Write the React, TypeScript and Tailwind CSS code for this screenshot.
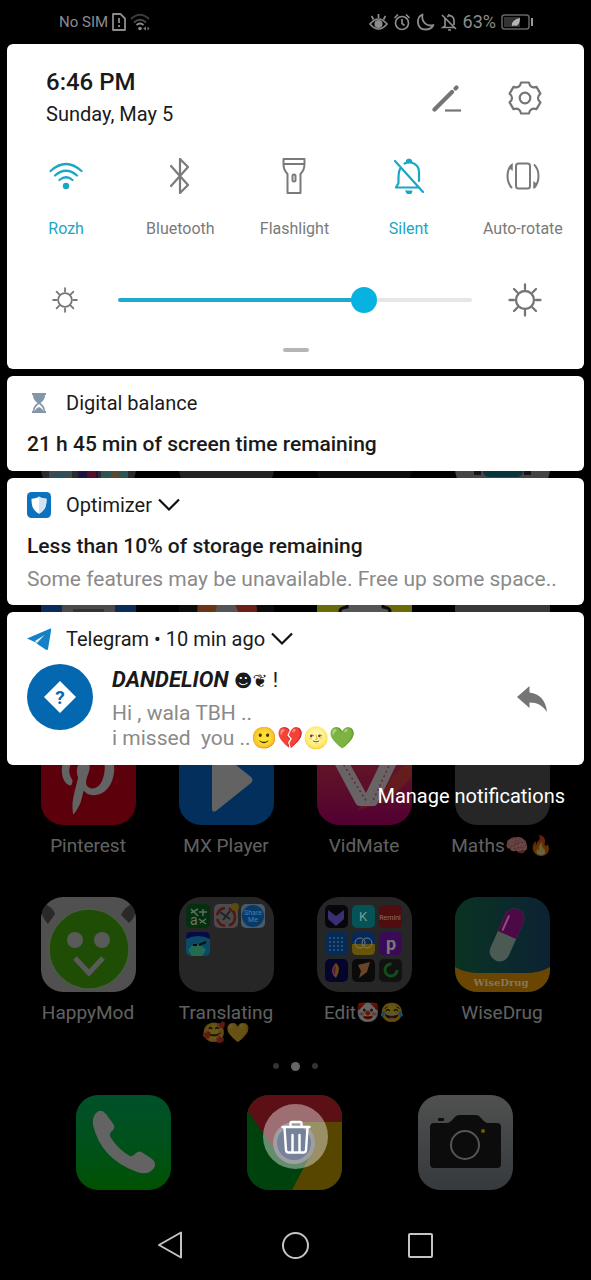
import type { ReactNode } from "react";
import { FaPinterestP } from "react-icons/fa";

const StatusBar = () => (
  <div className="flex h-11 items-center justify-between pl-[59px] pr-[57px] text-[#8c8c8c]">
    <div className="flex items-center gap-1">
      <span className="text-[15px] leading-5">No SIM</span>
      <svg width="14" height="18" viewBox="0 0 14 18" fill="none" stroke="currentColor" strokeWidth="1.8">
        <path d="M1 1h7.5L13 5.5V17H1z" strokeLinejoin="round" />
        <path d="M7 5v5M7 12v2" />
      </svg>
      <svg width="21" height="18" viewBox="0 0 21 18" fill="none" strokeWidth="1.8">
        <path d="M1 6q9-8.500 18 0" stroke="#3c3c3c" />
        <path d="M4 9.500q6-5.500 12 0" stroke="#4a4a4a" />
        <path d="M6.500 12q3.500-3 7 0" stroke="currentColor" />
        <circle cx="10" cy="15.500" r="1.800" fill="currentColor" />
        <path d="M13 15.500l3-2v4zM19.500 15.500l-2-2v4z" fill="#777" />
      </svg>
    </div>
    <div className="flex items-center gap-[5px]">
      <svg width="19" height="18" viewBox="0 0 19 18" fill="none" stroke="currentColor" strokeWidth="1.700">
        <path d="M1 11q8.500-10 17 0q-8.500 10-17 0z" />
        <circle cx="9.500" cy="11" r="3.200" fill="currentColor" />
        <path d="M9.500 5V1M4.500 6.500L2.500 3M14.500 6.500l2-3.500" />
      </svg>
      <svg width="18" height="18" viewBox="0 0 18 18" fill="none" stroke="currentColor" strokeWidth="1.700">
        <circle cx="9" cy="10" r="6.500" />
        <path d="M9 6v4.500l2.500 2M1.500 5L5 1.500M16.500 5L13 1.500" />
      </svg>
      <svg width="19" height="18" viewBox="0 0 19 18" fill="none" stroke="currentColor" strokeWidth="1.800">
        <path d="M6.500 1.500C-.5 4.500.5 16.500 9.500 16.500c4 0 7-2.500 8-4.500C11 14 5 9 6.500 1.500z" strokeLinejoin="round" />
      </svg>
      <svg width="18" height="18" viewBox="0 0 18 18" fill="none" stroke="currentColor" strokeWidth="1.700">
        <path d="M2 2l14 14M5 5.500V13L3 14.500h11M7 3.500c3.500-2 7 0 7 4V12M9 1v2M8 17h3" />
      </svg>
      <span className="text-lg leading-5">63%</span>
      <svg width="33" height="16" viewBox="0 0 33 16" fill="none">
        <rect x="1" y="1" width="27" height="14" rx="2.500" stroke="#666" strokeWidth="1.500" />
        <rect x="3" y="3" width="16" height="10" fill="#333" />
        <path d="M11 12c-1-4 3-7 8-8c0 5-2 9-6 7.500z" fill="#b5b5b5" />
        <path d="M31 4v8" stroke="#999" strokeWidth="2" />
      </svg>
    </div>
  </div>
);

const WifiTileIcon = () => (
  <svg width="34" height="30" viewBox="0 0 34 30" fill="none" stroke="currentColor" strokeWidth="2.200" strokeLinecap="round">
    <path d="M1.500 10q15.500-14 31 0M6 14.500q11-9.500 22 0M10.500 19q6.500-5.500 13 0" />
    <circle cx="17" cy="25" r="3.200" fill="currentColor" stroke="none" />
  </svg>
);

const BluetoothTileIcon = () => (
  <svg width="22" height="36" viewBox="0 0 22 36" fill="none" stroke="currentColor" strokeWidth="2.200" strokeLinejoin="round" strokeLinecap="round">
    <path d="M2 8l17 19-8 8V1l8 8L2 28" />
  </svg>
);

const FlashlightTileIcon = () => (
  <svg width="24" height="36" viewBox="0 0 24 36" fill="none" stroke="currentColor" strokeWidth="2" strokeLinejoin="round">
    <path d="M1.500 1h21v5q0 6-4 10v19h-13V16q-4-4-4-10zM1.500 6h21" />
    <rect x="10.500" y="16.500" width="3" height="7" rx="1.500" />
  </svg>
);

const SilentTileIcon = () => (
  <svg width="32" height="36" viewBox="0 0 32 36" fill="none" stroke="currentColor" strokeWidth="2.200" strokeLinecap="round" strokeLinejoin="round">
    <path d="M2 3l28 31M7 11c-2 4-1.500 9-1.500 14L3 29.500h22M11.500 5.500C19 2 26 7 26 14v9" />
    <path d="M13 4a3 3 0 016 0zM13 33h6a3 3 0 01-6 0z" fill="currentColor" strokeWidth="1" />
  </svg>
);

const RotateTileIcon = () => (
  <svg width="34" height="28" viewBox="0 0 34 28" fill="none" stroke="currentColor" strokeWidth="2">
    <rect x="10" y="1.500" width="14" height="25" rx="2.500" />
    <path d="M6 2.500C0 8 0 20 6 26M28 2.500c6 5.500 6 17.500 0 23.500" />
    <path d="M6.500 1.500v7L3 6zM27.500 26.500v-7L31 22z" fill="currentColor" strokeWidth=".5" />
  </svg>
);

const SunIcon = ({ size }: { size: number }) => (
  <svg className="shrink-0 text-[#757575]" width={size} height={size} viewBox="0 0 34 34" fill="none" stroke="currentColor" strokeWidth="2.300" strokeLinecap="round">
    <circle cx="17" cy="17" r="9" />
    <path d="M17 1.500V6M17 28v4.500M1.500 17H6M28 17h4.500M6 6l3.500 3.500M24.500 24.500L28 28M6 28l3.500-3.500M24.500 9.500L28 6" />
  </svg>
);

const ChevronIcon = () => (
  <svg width="22" height="14" viewBox="0 0 22 14" fill="none" stroke="#111" strokeWidth="2.200">
    <path d="M1 1.500l10 10 10-10" />
  </svg>
);

const tiles = [
  { label: "Rozh", icon: <WifiTileIcon />, on: true },
  { label: "Bluetooth", icon: <BluetoothTileIcon />, on: false },
  { label: "Flashlight", icon: <FlashlightTileIcon />, on: false },
  { label: "Silent", icon: <SilentTileIcon />, on: true },
  { label: "Auto-rotate", icon: <RotateTileIcon />, on: false },
];

const QuickSettings = () => (
  <section className="rounded-md bg-white pb-[17px] pt-[22px]">
    <div className="flex items-center justify-between pl-[39px] pr-[42px] text-[#1a1a1a]">
      <div>
        <p className="text-2xl font-medium leading-8">6:46 PM</p>
        <p className="text-[20px] leading-8">Sunday, May 5</p>
      </div>
      <div className="flex items-center gap-[46px] text-[#757575]">
        <button type="button" aria-label="Edit tiles">
          <svg width="30" height="30" viewBox="0 0 30 30" fill="none" stroke="currentColor">
            <path d="M2.500 26.500L20 9" strokeWidth="4.200" strokeLinecap="round" />
            <path d="M23.500 5.500l1-1" strokeWidth="4.200" strokeLinecap="round" />
            <path d="M13 27.500h16" strokeWidth="2.200" />
          </svg>
        </button>
        <button type="button" aria-label="Settings">
          <svg width="34" height="34" viewBox="0 0 34 34" fill="none" stroke="currentColor" strokeWidth="2.200" strokeLinejoin="round">
            <path d="M13.1 1.500h7.8Q22.300 7.900 28.500 5.900L32.400 12.600Q27.500 17 32.400 21.400L28.500 28.100Q22.300 26.100 20.900 32.500H13.100Q11.700 26.100 5.500 28.100L1.600 21.400Q6.500 17 1.600 12.600L5.500 5.900Q11.700 7.900 13.100 1.500z" />
            <circle cx="17" cy="17" r="5.300" />
          </svg>
        </button>
      </div>
    </div>
    <div className="mt-[26px] grid grid-cols-5 pl-[2px] pr-1">
      {tiles.map((tile) => (
        <button
          key={tile.label}
          type="button"
          className={`flex flex-col items-center gap-[23px] ${tile.on ? "text-[#1ba6c6]" : "text-[#7a7a7a]"}`}>
          <span className="flex h-10 items-center">{tile.icon}</span>
          <span className="text-base leading-5">{tile.label}</span>
        </button>
      ))}
    </div>
    <div className="mt-[41px] flex h-10 items-center pl-[45px] pr-[42px]">
      <SunIcon size={26} />
      <input
        type="range"
        aria-label="Brightness"
        defaultValue={71}
        className="ml-10 mr-9 h-7 min-w-0 flex-1 appearance-none bg-transparent [&::-webkit-slider-runnable-track]:h-1 [&::-webkit-slider-runnable-track]:rounded-full [&::-webkit-slider-runnable-track]:bg-[linear-gradient(to_right,#1fa9cb_70%,#e6e6e6_70%)] [&::-webkit-slider-thumb]:-mt-[11px] [&::-webkit-slider-thumb]:size-[26px] [&::-webkit-slider-thumb]:appearance-none [&::-webkit-slider-thumb]:rounded-full [&::-webkit-slider-thumb]:bg-[#06b3e0]"
      />
      <SunIcon size={34} />
    </div>
    <div className="mx-auto mt-7 h-1 w-[26px] rounded-full bg-[#b5b5b5]" />
  </section>
);

type NoticeProps = { icon: ReactNode; app: string; expandable?: boolean; children: ReactNode };

const Notice = ({ icon, app, expandable, children }: NoticeProps) => (
  <article className="rounded-md bg-white px-5 pt-[11px] text-[#1a1a1a]">
    <div className="flex h-8 items-center">
      <span className="mr-[15px] flex w-6 justify-center">{icon}</span>
      <span className="text-[20px] leading-6">{app}</span>
      {expandable && (
        <button type="button" aria-label="Expand" className="ml-[6px]">
          <ChevronIcon />
        </button>
      )}
    </div>
    {children}
  </article>
);

const NotificationShade = () => (
  <div className="z-10 col-start-1 row-start-1 flex min-w-0 flex-col">
    <StatusBar />
    <div className="flex flex-col gap-[7px] px-[7px]">
      <QuickSettings />
      <Notice
        app="Digital balance"
        icon={
          <svg width="14" height="20" viewBox="0 0 14 20">
            <path d="M0 0h14v2H0zM0 18h14v2H0zM1 2h12c0 4-2 6-4.500 8C11 12 13 14 13 18h-1.500c0-3-2-5-4.500-7-2.500 2-4.500 4-4.500 7H1c0-4 2-6 4.500-8C3 8 1 6 1 2z" fill="#8497a8" />
            <path d="M3 18c0-2 2-3 4-4 2 1 4 2 4 4z" fill="#8497a8" />
          </svg>
        }>
        <p className="mt-[11px] pb-[13px] text-[21px] font-medium leading-7">21 h 45 min of screen time remaining</p>
      </Notice>
      <Notice
        app="Optimizer"
        expandable
        icon={
          <svg width="24" height="26" viewBox="0 0 24 26">
            <rect width="24" height="26" rx="4.500" fill="#0c72bd" />
            <path d="M12 4.500c2 1.500 4 2 7.500 2.200 0 7-1 11.500-7.500 15-6.500-3.500-7.500-8-7.500-15C8 6.500 10 6 12 4.500z" fill="#fff" />
            <path d="M12 4.500c2 1.500 4 2 7.500 2.200 0 7-1 11.500-7.500 15z" fill="#cfe3f3" />
          </svg>
        }>
        <p className="mt-[11px] text-[21px] font-medium leading-7">Less than 10% of storage remaining</p>
        <p className="mt-[5px] overflow-hidden whitespace-nowrap pb-3 text-[21px] leading-7 text-[#8a8a8a]">
          Some features may be unavailable. Free up some space..
        </p>
      </Notice>
      <Notice
        app="Telegram • 10 min ago"
        expandable
        icon={
          <svg width="24" height="24" viewBox="0 0 24 24">
            <path d="M0 11.500L24.500 1 21 22q-.5 1.500-2 .7L11 17.500 9 15.500z" fill="#1480c8" />
            <path d="M8 14L17.500 8 10 16z" fill="#e8f4fb" />
          </svg>
        }>
        <div className="mt-[9px] flex items-center pb-[14px] pr-[17px]">
          <div className="flex size-[66px] shrink-0 items-center justify-center self-start rounded-full bg-[#0468b1]">
            <svg width="32" height="32" viewBox="0 0 32 32">
              <path d="M16 0l16 16-16 16L0 16z" fill="#fff" />
              <text x="16" y="22.500" textAnchor="middle" fontSize="19" fontWeight="700" fill="#0468b1">?</text>
            </svg>
          </div>
          <div className="ml-[19px] flex-1">
            <p className="text-[21px] leading-8">
              <b className="text-[22px] italic">DANDELION</b>{" "}
              <span className="font-[family-name:'DejaVu_Sans',sans-serif] text-lg">☻❦</span> !
            </p>
            <p className="mt-[5px] whitespace-pre-wrap text-[21px] leading-[25px] text-[#8a8a8a]">
              {"Hi , wala TBH ..\ni missed  you ..🙂💔🌝💚"}
            </p>
          </div>
          <button type="button" aria-label="Reply" className="mb-[18px]">
            <svg width="30" height="26" viewBox="0 0 30 26">
              <path d="M0 11L12.500 0v6.500C23 7.500 29 15 30 26c-4.500-6.500-9.500-9.500-17.500-9.500V22z" fill="#757575" />
            </svg>
          </button>
        </div>
      </Notice>
    </div>
    <button type="button" className="mr-[26px] mt-[15px] self-end text-[20px] leading-8 text-white">
      Manage notifications
    </button>
    <button
      type="button"
      aria-label="Clear all"
      className="mb-[41px] mt-auto flex size-[65px] items-center justify-center self-center rounded-full bg-white/40">
      <svg width="30" height="34" viewBox="0 0 30 34" fill="none" stroke="#fff" strokeWidth="2.400" strokeLinejoin="round" strokeLinecap="round">
        <path d="M1.500 7h27M9.500 6V3.500Q9.500 2 11 2h8q1.500 0 1.500 1.500V6M3.500 8l1.500 22q.2 2.500 2.500 2.500h15q2.300 0 2.500-2.500l1.500-22M11.500 15v17M18.500 15v17" />
      </svg>
    </button>
    <nav className="grid h-[70px] grid-cols-3 items-center justify-items-center px-[108px] text-[#c4c4c4]">
      <button type="button" aria-label="Back">
        <svg width="26" height="28" viewBox="0 0 26 28" fill="none" stroke="currentColor" strokeWidth="2" strokeLinejoin="round">
          <path d="M23 1.500v25L1 14z" />
        </svg>
      </button>
      <button type="button" aria-label="Home" className="size-[27px] rounded-full border-2" />
      <button type="button" aria-label="Recents" className="size-[25px] rounded-[2px] border-2" />
    </nav>
  </div>
);

const AppIcon = ({ className, children }: { className: string; children?: ReactNode }) => (
  <div className={`size-[95px] shrink-0 overflow-hidden rounded-[22px] ${className}`}>
    {children && (
      <svg className="size-full" viewBox="0 0 95 95">
        {children}
      </svg>
    )}
  </div>
);

const apps: { label?: string; icon: ReactNode }[] = [
  {
    icon: (
      <AppIcon className="bg-[#2b2b2b]">
        <path d="M8 60h23v23H8z" fill="#3d4a50" />
        <path d="M14 78l5 4 6-5" stroke="#13576b" strokeWidth="2" fill="none" />
        <path d="M37 60h20v23H37z" fill="#1c1440" />
        <path d="M46 60h9v23h-9z" fill="#541028" />
        <path d="M60 60h27v23H60z" fill="#2d5550" />
        <path d="M70 60h8v23h-8z" fill="#5a4a35" />
      </AppIcon>
    ),
  },
  { icon: <AppIcon className="bg-[#242424]" /> },
  { icon: <AppIcon className="bg-[#0c0c0c]" /> },
  {
    icon: (
      <AppIcon className="bg-[#454545]">
        <rect x="28" y="40" width="40" height="41" rx="6" fill="#08353c" />
        <path d="M19 74h7v5h-7zM69 74h7v5h-7z" fill="#151515" />
      </AppIcon>
    ),
  },
  {
    icon: (
      <AppIcon className="bg-[#0a2c5c]">
        <path d="M21 20h53v55H21z" fill="#4a4a4a" />
        <path d="M32 46h31v6H32z" fill="#333" />
      </AppIcon>
    ),
  },
  {
    icon: (
      <AppIcon className="bg-[#0c0c0c]">
        <circle cx="48" cy="47" r="30" fill="#6b1e17" />
        <path d="M19 38h22v18H19z" fill="#6b3415" />
        <path d="M40 36h14l8 20H34z" fill="#555" />
      </AppIcon>
    ),
  },
  {
    icon: (
      <AppIcon className="bg-[#6b6a08]">
        <path d="M30 20h36v24q7 1 7 4t-7 4l6 18H24l6-18q-7-1-7-4t7-4z" fill="#555" stroke="#0a0a0a" strokeWidth="3" />
      </AppIcon>
    ),
  },
  { icon: <AppIcon className="bg-[#383838]" /> },
  {
    label: "Pinterest",
    icon: (
      <div className="flex size-[95px] items-center justify-center rounded-[22px] bg-[#5c000c] pt-1 text-[#636363]">
        <FaPinterestP size={70} />
      </div>
    ),
  },
  {
    label: "MX Player",
    icon: (
      <AppIcon className="bg-[#022f5c]">
        <path d="M33 22v57q0 4 4 2l35-28q3-3 0-6L37 19q-4-2-4 3z" fill="#636363" />
      </AppIcon>
    ),
  },
  {
    label: "VidMate",
    icon: (
      <AppIcon className="bg-linear-to-b from-[#6b1c1a] to-[#520032]">
        <path d="M95 28L40 80l30-8 25-25z" fill="#6b2415" opacity=".6" />
        <path d="M2 5h15l32 58 28-58h17L60 74q-1 2-3 2H43q-3 0-4-2z" fill="#696365" />
        <path d="M16 18l34 54M80 18L55 73" stroke="#632a2c" strokeWidth="1.500" strokeDasharray="2 3" />
      </AppIcon>
    ),
  },
  { label: "Maths🧠🔥", icon: <AppIcon className="bg-[#262626]" /> },
  {
    label: "HappyMod",
    icon: (
      <AppIcon className="bg-[#505050]">
        <path d="M2 6Q12 10 14 17L7 27Q0 20 0 10zM93 6Q83 10 80 18l8 8q7-6 7-16z" fill="#292929" />
        <circle cx="48" cy="52" r="40" fill="#1f4d06" stroke="#4b5a44" strokeWidth="1.500" />
        <circle cx="34" cy="43" r="8" fill="#5a5a5a" />
        <circle cx="61" cy="43" r="8" fill="#5a5a5a" />
        <path d="M34 61l14 15 14-15" stroke="#5a5a5a" strokeWidth="5" fill="none" />
      </AppIcon>
    ),
  },
  {
    label: "Translating 🥰💛",
    icon: (
      <AppIcon className="bg-[#262626]">
        <rect x="7" y="7" width="24" height="24" rx="5" fill="#05300f" />
        <path d="M12 12l7 7M19 12l-7 4M20 15h8M24 12v7M20 22l7 5M27 22l-6 4" stroke="#5f705f" strokeWidth="1.500" />
        <text x="11" y="28" fontSize="14" fill="#6a786a">a</text>
        <rect x="35" y="7" width="24" height="24" rx="5" fill="#4d4a4a" />
        <circle cx="47" cy="20" r="9" fill="#4a4a4a" stroke="#541414" strokeWidth="2.500" strokeDasharray="11 4" />
        <path d="M41 15l10 7M44 23l7-9" stroke="#222" strokeWidth="2" />
        <circle cx="56" cy="10" r="4" fill="#5a4a10" />
        <rect x="62" y="7" width="24" height="24" rx="5" fill="#4b5a68" />
        <circle cx="74" cy="19" r="11" fill="#083a68" />
        <text x="74" y="18" textAnchor="middle" fontSize="7" fill="#4d7fa8">Share</text>
        <text x="74" y="25" textAnchor="middle" fontSize="7" fill="#4d7fa8">Me</text>
        <rect x="7" y="35" width="24" height="24" rx="5" fill="#0b4a66" />
        <path d="M7 42v-2q0-5 5-5h14q5 0 5 5v2q-12-6-24 0z" fill="#060a45" />
        <path d="M9 53q8-12 18 0l-4 6H13z" fill="#226b50" />
        <path d="M14 48h4M20 48l7-3" stroke="#0a0a0a" strokeWidth="2" />
      </AppIcon>
    ),
  },
  {
    label: "Edit🤡😂",
    icon: (
      <AppIcon className="bg-[#262626]">
        <rect x="8" y="8" width="23" height="23" rx="5" fill="#07070b" />
        <path d="M11 13l8 6 8-6v9l-8 7-8-7z" fill="#3a2f70" />
        <rect x="35" y="8" width="23" height="23" rx="5" fill="#055357" />
        <text x="46" y="24" textAnchor="middle" fontSize="13" fill="#6f9c9e">K</text>
        <rect x="62" y="8" width="23" height="23" rx="5" fill="#4f0d10" />
        <text x="73" y="23" textAnchor="middle" fontSize="7" fill="#8a7070">Remini</text>
        <rect x="8" y="35" width="23" height="23" rx="5" fill="#062c56" />
        <path d="M12 41h15M12 45h15M12 49h15M12 53h15" stroke="#47719c" strokeDasharray="2 2" />
        <rect x="35" y="35" width="23" height="23" rx="5" fill="#06295a" />
        <path d="M35 47h23v6q0 5-5 5H40q-5 0-5-5z" fill="#6a5408" />
        <circle cx="43" cy="46" r="5" fill="none" stroke="#6f7f8e" />
        <circle cx="50" cy="46" r="5" fill="none" stroke="#6f7f8e" />
        <rect x="62" y="35" width="23" height="23" rx="5" fill="#3a0a58" />
        <text x="74" y="53" textAnchor="middle" fontSize="18" fontWeight="700" fill="#777">p</text>
        <rect x="8" y="62" width="23" height="23" rx="5" fill="#05052c" />
        <path d="M19 66q6 5 0 15-8-7 0-15z" fill="#6b4a14" />
        <path d="M19 68q-5 5-1 10z" fill="#5e1259" />
        <rect x="35" y="62" width="23" height="23" rx="5" fill="#0a0a0a" />
        <path d="M41 68l12-3-3 10-8 6 2-7z" fill="#6b4328" />
        <rect x="62" y="62" width="23" height="23" rx="5" fill="#111" stroke="#1f1f1f" strokeDasharray="2 2" />
        <circle cx="74" cy="73" r="6" fill="none" stroke="#144d1c" strokeWidth="3" strokeDasharray="28 9" />
      </AppIcon>
    ),
  },
  {
    label: "WiseDrug",
    icon: (
      <AppIcon className="bg-linear-to-r from-[#0a3321] to-[#0c2233]">
        <g transform="rotate(24 52 38)">
          <rect x="42" y="10" width="20" height="56" rx="10" fill="#4c5a54" />
          <path d="M42 38V20a10 10 0 0120 0v18z" fill="#4d0946" />
          <path d="M46 20v15" stroke="#85527f" strokeWidth="2" strokeLinecap="round" />
        </g>
        <path d="M0 70q10 6 25 6h45q15 0 25-6v25H0z" fill="#6b4502" />
        <text x="46" y="89" textAnchor="middle" fontSize="10" fontWeight="700" fontFamily="DejaVu Serif, serif" fill="#85775c">WiseDrug</text>
      </AppIcon>
    ),
  },
];

const HomeScreen = () => (
  <main className="col-start-1 row-start-1 min-w-0 pb-[90px] pt-[396px]">
    <div className="grid auto-rows-[142px] grid-cols-4 gap-y-[25px] pl-[19px] pr-5">
      {apps.map((app, i) => (
        <div key={i} className="flex flex-col items-center gap-[11px]">
          {app.icon}
          {app.label && (
            <span className="max-w-[120px] text-center text-[19px] leading-5 text-white/40">{app.label}</span>
          )}
        </div>
      ))}
    </div>
    <div className="mt-[22px] flex h-[10px] items-center justify-center gap-3">
      <span className="size-[6px] rounded-full bg-[#333]" />
      <span className="size-[9px] rounded-full bg-[#666]" />
      <span className="size-[6px] rounded-full bg-[#333]" />
    </div>
    <div className="mt-6 grid grid-cols-3 justify-items-center pl-[38px] pr-10">
      <AppIcon className="bg-linear-to-b from-[#00502a] to-[#005200]">
        <path d="M20 18q5-5 10 1l8 11q1 3-1 5-5 4-2 8 8 12 19 18 3 1 6-3 3-3 7 0l9 6q5 4 2 9-6 8-17 4Q25 64 17 30q-1-8 3-12z" fill="#636363" />
      </AppIcon>
      <AppIcon className="bg-[#00420e]">
        <path d="M0 0h95v27H45L28 55 0 15z" fill="#5c1016" />
        <path d="M45 27h50v68H45l20-38z" fill="#574600" />
        <path d="M0 15l28 42 17 38H0z" fill="#00420e" />
        <circle cx="47" cy="48" r="21" fill="#5e5e66" />
        <circle cx="47" cy="48" r="17" fill="#1c2f55" />
      </AppIcon>
      <AppIcon className="bg-linear-to-b from-[#505050] to-[#353a3d]">
        <path d="M16 28h14q3-1 6-5 2-3 6-3h15q4 0 6 3 3 4 6 5h10q4 0 4 4v37q0 4-4 4H16q-4 0-4-4V32q0-4 4-4z" fill="#0c0c0c" />
        <rect x="20" y="23" width="6" height="3" rx="1" fill="#0c0c0c" />
        <circle cx="47" cy="50" r="14" fill="none" stroke="#555" strokeWidth="2" />
        <circle cx="65" cy="36" r="2" fill="#6b5c00" />
      </AppIcon>
    </div>
  </main>
);

const App = () => {
  return (
    <div className="grid min-h-screen bg-black font-[family-name:Roboto,sans-serif]">
      <HomeScreen />
      <NotificationShade />
    </div>
  );
};

export default App;
